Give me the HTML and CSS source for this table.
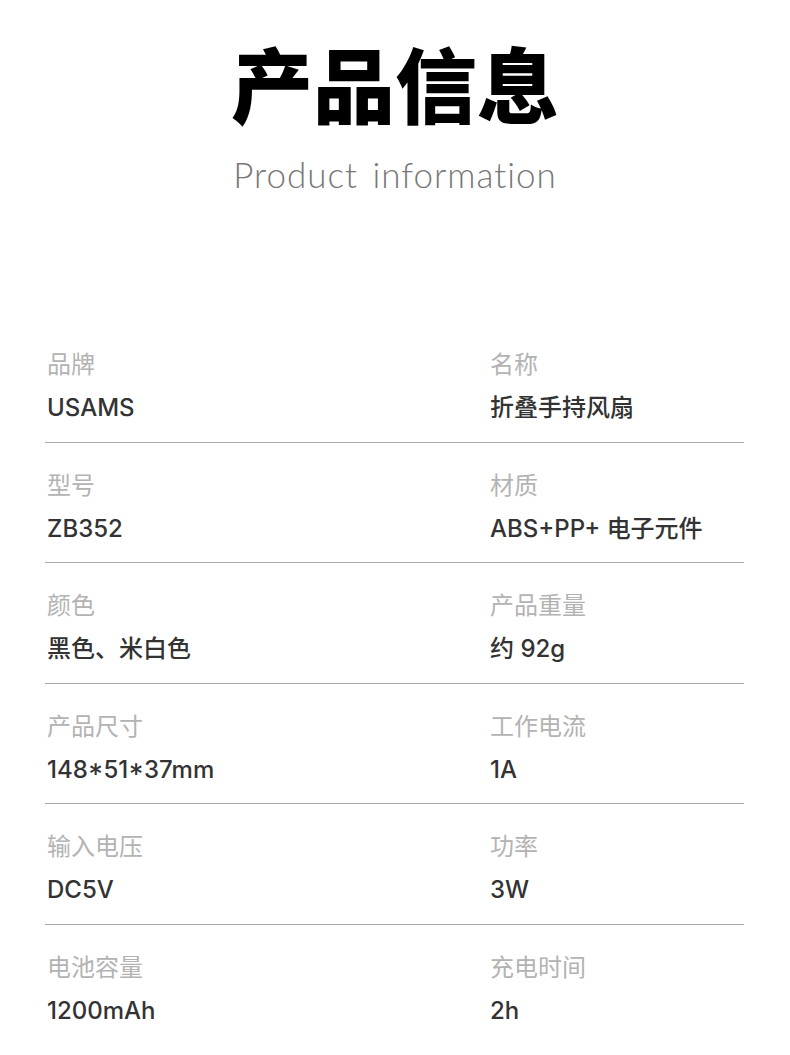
FILE: index.html
```html
<!DOCTYPE html>
<html>
<head>
<meta charset="UTF-8">
<title>产品信息</title>

<link rel="stylesheet" href="styles.css">

</head>
<body>
	<!-- heading -->
	<div class="head">
		<h1 class="title">产品信息</h1>
		<p class="subtitle">Product information</p>
	</div>

	<!-- spec list -->
	<div class="specs">
		<div class="row">
			<div class="cell"><span class="label">品牌</span><span class="value">USAMS</span></div>
			<div class="cell"><span class="label">名称</span><span class="value">折叠手持风扇</span></div>
		</div>
		<div class="row">
			<div class="cell"><span class="label">型号</span><span class="value">ZB352</span></div>
			<div class="cell"><span class="label">材质</span><span class="value">ABS+PP+ 电子元件</span></div>
		</div>
		<div class="row">
			<div class="cell"><span class="label">颜色</span><span class="value">黑色、米白色</span></div>
			<div class="cell"><span class="label">产品重量</span><span class="value">约 92g</span></div>
		</div>
		<div class="row">
			<div class="cell"><span class="label">产品尺寸</span><span class="value">148*51*37mm</span></div>
			<div class="cell"><span class="label">工作电流</span><span class="value">1A</span></div>
		</div>
		<div class="row">
			<div class="cell"><span class="label">输入电压</span><span class="value">DC5V</span></div>
			<div class="cell"><span class="label">功率</span><span class="value">3W</span></div>
		</div>
		<div class="row last">
			<div class="cell"><span class="label">电池容量</span><span class="value">1200mAh</span></div>
			<div class="cell"><span class="label">充电时间</span><span class="value">2h</span></div>
		</div>
	</div>
</body>
</html>
```

FILE: styles.css
```css
body {
	margin: 0;
	background: #ffffff;
	font-family: "Noto Sans CJK SC", sans-serif;
}

/* top heading */
.head {
	text-align: center;
	padding-top: 32px;
}

.title {
	margin: 0;
	font-size: 82px;
	line-height: 100px;
	font-weight: 900;
	color: #000;
}

.subtitle {
	margin: 22px 0 0 0;
	font-family: "Lato", sans-serif;
	font-weight: 300;
	font-size: 35px;
	line-height: 40px;
	letter-spacing: 1px;
	word-spacing: 4px;
	color: #777;
}

/* table of specs */
.specs {
	margin: 128px 46px 0 45px;
}

.row {
	display: grid;
	grid-template-columns: 443px 1fr;
	padding: 26px 0 18.5px 0;
	border-bottom: 1px solid #aaaaaa;
}

.row.last {
	border-bottom: none;
}

.cell {
	display: flex;
	flex-direction: column;
	gap: 15px;
	padding-left: 2px;
}

.label {
	font-size: 24px;
	line-height: 30px;
	color: #b3b3b3;
}

.value {
	font-family: "Inter", "Noto Sans CJK SC", sans-serif;
	font-size: 24px;
	font-weight: 500;
	line-height: 30px;
	color: #333;
}
```
